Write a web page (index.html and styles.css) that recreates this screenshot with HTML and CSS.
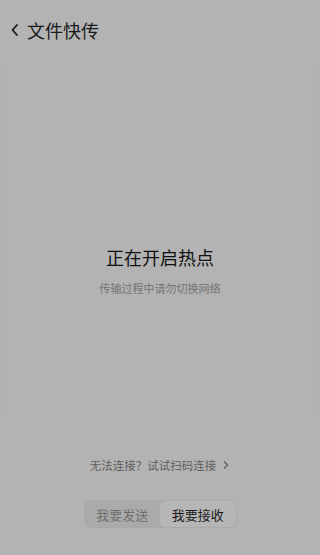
FILE: index.html
```html
<!DOCTYPE html>
<html lang="zh">
<head>
<meta charset="utf-8">
<link rel="stylesheet" href="styles.css">
</head>
<body>
<div class="app">
  <header class="topbar">
    <svg class="back" width="10" height="14" viewBox="0 0 10 14"><path d="M7 2 L2.5 7 L7 12" fill="none" stroke="#1a1a1a" stroke-width="1.8" stroke-linecap="round" stroke-linejoin="round"/></svg>
    <span class="title">文件快传</span>
  </header>
  <main class="panel">
    <div class="status">正在开启热点</div>
    <div class="hint">传输过程中请勿切换网络</div>
  </main>
  <div class="scan">无法连接？试试扫码连接<svg class="chev" width="8" height="10" viewBox="0 0 8 10"><path d="M2.5 2 L5.5 5 L2.5 8" fill="none" stroke="#5e5e5e" stroke-width="1.3" stroke-linecap="round" stroke-linejoin="round"/></svg></div>
  <div class="seg-wrap">
    <div class="seg">
      <div class="seg-item">我要发送</div>
      <div class="seg-item active">我要接收</div>
    </div>
  </div>
</div>
</body>
</html>
```
FILE: styles.css
```css
html, body {
  margin: 0;
  padding: 0;
  background: #b3b3b3;
}
body {
  font-family: "Noto Sans CJK SC", "Noto Sans", sans-serif;
  width: 320px;
  height: 555px;
  overflow: hidden;
}
.app {
  display: flex;
  flex-direction: column;
  height: 555px;
}
.topbar {
  height: 60px;
  display: flex;
  align-items: center;
  padding-left: 10px;
  box-sizing: border-box;
  padding-bottom: 1px;
}
.back {
  margin-right: 7px;
  margin-top: 1px;
}
.title {
  font-size: 18px;
  color: #1a1a1a;
  line-height: 24px;
}
.panel {
  height: 360px;
  margin: 0 1px;
  border-left: 1px solid #afafaf;
  border-right: 1px solid #afafaf;
  display: flex;
  flex-direction: column;
  align-items: center;
  box-sizing: border-box;
  padding-top: 184px;
}
.status {
  font-size: 18px;
  line-height: 26px;
  color: #111;
}
.hint {
  margin-top: 11px;
  font-size: 11px;
  line-height: 14px;
  color: #747474;
}
.scan {
  margin-top: 37px;
  display: flex;
  justify-content: center;
  align-items: center;
  font-size: 11.5px;
  line-height: 16px;
  color: #5e5e5e;
}
.chev {
  margin-left: 6px;
}
.seg-wrap {
  margin-top: 27px;
  display: flex;
  justify-content: center;
}
.seg {
  display: flex;
  width: 153px;
  height: 28px;
  box-sizing: border-box;
  padding: 1px;
  border-radius: 7px;
  background: #aaaaaa;
}
.seg-item {
  flex: 1;
  display: flex;
  align-items: center;
  justify-content: center;
  font-size: 13px;
  color: #6e6e6e;
  border-radius: 6px;
}
.seg-item.active {
  background: #b6b6b6;
  color: #1a1a1a;
}
```
